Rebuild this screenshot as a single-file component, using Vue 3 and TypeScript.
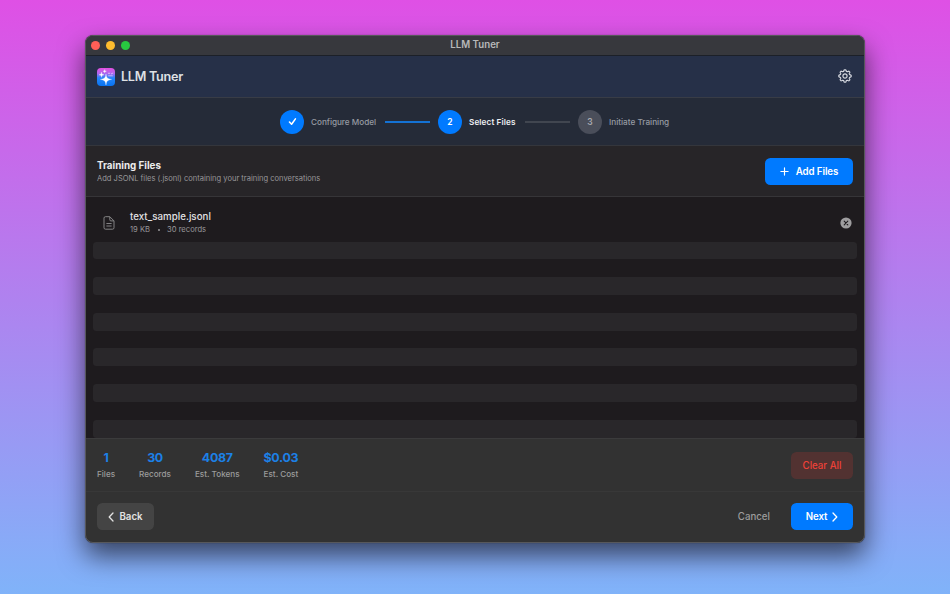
<script setup lang="ts">
interface Stat {
  value: string
  label: string
}

const stats: Stat[] = [
  { value: '1', label: 'Files' },
  { value: '30', label: 'Records' },
  { value: '4087', label: 'Est. Tokens' },
  { value: '$0.03', label: 'Est. Cost' },
]

const stripes = 6

// Outline of an eight-toothed gear with rounded teeth, centred on the origin.
function gearOutline(inner: number, outer: number): string {
  const mid = (inner + outer) / 2
  const amp = (outer - inner) / 2
  const points: string[] = []
  for (let i = 0; i < 160; i++) {
    const a = (i / 160) * Math.PI * 2
    const wave = Math.tanh(2 * Math.cos(8 * a)) / Math.tanh(2)
    const r = mid + amp * wave
    points.push(`${(r * Math.sin(a)).toFixed(2)} ${(-r * Math.cos(a)).toFixed(2)}`)
  }
  return `M${points.join('L')}Z`
}

const gear = gearOutline(4.8, 6.2)
</script>

<template>
  <main class="desktop">
    <section class="window">
      <div class="titlebar">
        <div class="lights">
          <i class="light red"></i>
          <i class="light yellow"></i>
          <i class="light green"></i>
        </div>
        <span class="window-title">LLM Tuner</span>
      </div>

      <header class="header">
        <svg class="logo" viewBox="0 0 18 18">
          <defs>
            <linearGradient id="logo-fill" x1="0" y1="0" x2="0" y2="1">
              <stop offset="0" stop-color="#e34fe0" />
              <stop offset="0.3" stop-color="#b067ee" />
              <stop offset="0.55" stop-color="#2586fb" />
              <stop offset="1" stop-color="#0873f2" />
            </linearGradient>
          </defs>
          <rect width="18" height="18" rx="4" fill="url(#logo-fill)" />
          <path d="M9 6C9.6 10.2 10.4 10.7 14.6 11.4C10.4 12.1 9.6 12.7 9 17C8.4 12.7 7.6 12.1 3.4 11.4C7.6 10.7 8.4 10.2 9 6Z" fill="#fff" stroke="#fff" stroke-width=".3" />
          <path d="M4.5 4.3C4.8 6.2 5 6.4 6.9 6.8C5 7.2 4.8 7.4 4.5 9.3C4.2 7.4 4 7.2 2.1 6.8C4 6.4 4.2 6.2 4.5 4.3Z" fill="#fff" stroke="#fff" stroke-width=".4" />
          <path d="M7.7 1.5C7.9 2.8 8.1 3 9.4 3.2C8.1 3.4 7.9 3.6 7.7 4.9C7.5 3.6 7.3 3.4 6 3.2C7.3 3 7.5 2.8 7.7 1.5Z" fill="#fff" stroke="#fff" stroke-width=".3" />
          <path d="M11 5.3h2M14 6l2-1M11.2 7.8h4.6" fill="none" stroke="#f6dcff" stroke-width=".8" opacity=".8" />
        </svg>
        <h1 class="app-name">LLM Tuner</h1>
        <svg class="gear" viewBox="-7 -7 14 14">
          <path :d="gear" />
          <circle r="2.1" />
        </svg>
      </header>

      <nav class="steps">
        <span class="badge done">
          <svg class="check" viewBox="0 0 12 12"><path d="M2.7 6.5L5 9L9.2 3.1" /></svg>
        </span>
        <span class="step-label first">Configure Model</span>
        <span class="connector filled"></span>
        <span class="badge current">2</span>
        <span class="step-label selected">Select Files</span>
        <span class="connector"></span>
        <span class="badge">3</span>
        <span class="step-label last">Initiate Training</span>
      </nav>

      <div class="toolbar">
        <div>
          <h2 class="section-title">Training Files</h2>
          <p class="section-note">Add JSONL files (.jsonl) containing your training conversations</p>
        </div>
        <button class="button primary add">
          <svg class="plus" viewBox="0 0 10 10"><path d="M5 1v8M1 5h8" /></svg>
          <span>Add Files</span>
        </button>
      </div>

      <div class="list">
        <div class="file">
          <svg class="doc" viewBox="0 0 12 14">
            <path d="M2.4 .7H6.8L11 4.9V11.7Q11 13.2 9.5 13.2H2.5Q1 13.2 1 11.7V2.1Q1 .7 2.4 .7Z" />
            <path d="M6.8 .9V3.8Q6.8 4.9 7.9 4.9H10.8M3.4 7.5H8.6M3.4 10H8.6" />
          </svg>
          <div class="file-info">
            <div class="file-name">text_sample.jsonl</div>
            <div class="file-meta"><span>19 KB</span><i class="dot"></i><span>30 records</span></div>
          </div>
          <svg class="remove" viewBox="0 0 12 12">
            <circle cx="6" cy="6" r="5.6" />
            <path d="M4.2 4.2L7.8 7.8M7.8 4.2L4.2 7.8" />
          </svg>
        </div>
        <div class="stripes">
          <div v-for="n in stripes" :key="n" class="stripe"></div>
        </div>
      </div>

      <div class="summary">
        <div v-for="stat in stats" :key="stat.label" class="stat">
          <strong class="stat-value">{{ stat.value }}</strong>
          <span class="stat-label">{{ stat.label }}</span>
        </div>
        <button class="button danger">Clear All</button>
      </div>

      <footer class="footer">
        <button class="button back">
          <svg class="chevron" viewBox="0 0 6 10"><path d="M5 1L1.2 5L5 9" /></svg>
          <span>Back</span>
        </button>
        <button class="button cancel">Cancel</button>
        <button class="button primary next">
          <span>Next</span>
          <svg class="chevron" viewBox="0 0 6 10"><path d="M1 1L4.8 5L1 9" /></svg>
        </button>
      </footer>
    </section>
  </main>
</template>

<style>
body {
  margin: 0;
  overflow: hidden;
}
</style>

<style scoped>
* {
  box-sizing: border-box;
}

.desktop {
  width: 950px;
  height: 594px;
  padding: 35px 0 0 85px;
  overflow: hidden;
  background: linear-gradient(#df50e5, #80b3f9);
  font-family: Inter, "Liberation Sans", sans-serif;
  white-space: nowrap;
}

.window {
  display: grid;
  grid-template-rows: 20px 42px 48px 51px 241px 54px 1fr;
  width: 780px;
  height: 508px;
  border: 1px solid #57585c;
  border-radius: 8px;
  overflow: hidden;
  background: #323232;
  box-shadow: 0 0 1px rgba(0, 0, 0, 0.6), 0 13px 27px rgba(0, 0, 0, 0.6);
}

.titlebar {
  display: grid;
  grid-template-columns: 1fr auto 1fr;
  align-items: center;
  background: #37383d;
  border-bottom: 1px solid #1c2028;
}

.lights {
  display: flex;
  gap: 6px;
  padding-left: 5px;
}

.light {
  width: 9px;
  height: 9px;
  border-radius: 50%;
}

.red { background: #ff5f57; }
.yellow { background: #febc2e; }
.green { background: #28c840; }

.window-title {
  padding-bottom: 2px;
  color: #b7b8ba;
  font-size: 9.7px;
  font-weight: 600;
  line-height: 17px;
}

.header {
  display: flex;
  align-items: center;
  padding: 0 12px 0 11px;
  background: #263048;
  border-bottom: 1px solid #383c46;
}

.logo {
  width: 18px;
  height: 18px;
}

.app-name {
  margin: 0 0 0 6px;
  color: #dfe1e5;
  font-size: 12.6px;
  font-weight: 600;
  letter-spacing: -0.26px;
}

.gear {
  width: 14px;
  height: 14px;
  margin: 0 0 1px auto;
  fill: none;
  stroke: #d4d7de;
  stroke-width: 1.2;
}

.steps {
  display: flex;
  align-items: center;
  padding-left: 194px;
  background: #252b38;
  border-bottom: 1px solid #34363c;
}

.badge {
  display: flex;
  align-items: center;
  justify-content: center;
  width: 24px;
  height: 24px;
  border-radius: 50%;
  background: #4a4e5a;
  color: #a9abb1;
  font-size: 8.5px;
  font-weight: 600;
}

.badge.done,
.badge.current {
  background: #007aff;
  color: #fff;
}

.check {
  width: 11px;
  height: 11px;
  fill: none;
  stroke: #fff;
  stroke-width: 1.7;
  stroke-linecap: round;
  stroke-linejoin: round;
}

.step-label {
  margin-left: 7px;
  color: #969aa2;
  font-size: 8.2px;
  font-weight: 500;
}

.step-label.first {
  width: 74px;
  letter-spacing: -0.03px;
}

.step-label.selected {
  width: 56px;
  color: #eceef1;
  font-weight: 600;
  letter-spacing: 0.1px;
}

.connector {
  width: 45px;
  height: 2px;
  margin-right: 8px;
  background: #414650;
}

.connector.filled { background: #1472d4; }

.toolbar {
  display: flex;
  align-items: center;
  justify-content: space-between;
  padding: 0 11px;
  background: #272528;
  border-bottom: 1px solid #363538;
}

.section-title {
  margin: 1px 0 2px;
  color: #ececed;
  font-size: 9.8px;
  font-weight: 700;
  line-height: 12px;
}

.section-note {
  margin: 0;
  color: #98979a;
  font-size: 7.56px;
  line-height: 10px;
}

.button {
  display: flex;
  align-items: center;
  justify-content: center;
  height: 27px;
  padding: 0;
  border: 0;
  border-radius: 5.5px;
  background: transparent;
  font-family: inherit;
  font-size: 9.7px;
  font-weight: 600;
}

.primary {
  background: #007aff;
  color: #fff;
}

.add {
  gap: 7px;
  width: 88px;
  letter-spacing: -0.08px;
}

.plus {
  width: 9px;
  height: 9px;
  fill: none;
  stroke: #fff;
  stroke-width: 1.3;
  stroke-linecap: round;
}

.list {
  padding: 7px 7px 0;
  overflow: hidden;
  background: #1e1b1e;
}

.file {
  display: flex;
  align-items: center;
  height: 37.5px;
  padding: 0 5px 0 10px;
}

.doc {
  width: 12px;
  height: 14px;
  fill: none;
  stroke: #8f8e90;
  stroke-width: 0.9;
}

.file-info {
  margin-left: 15px;
  padding-top: 1px;
}

.file-name {
  color: #e3e2e4;
  font-size: 9.7px;
  font-weight: 500;
  letter-spacing: 0.04px;
  line-height: 13px;
}

.file-meta {
  display: flex;
  align-items: center;
  color: #98979a;
  font-size: 7.6px;
  line-height: 13px;
}

.dot {
  width: 2px;
  height: 2px;
  margin: 1px 7.5px 0;
  border-radius: 50%;
  background: #98979a;
}

.remove {
  width: 12px;
  height: 12px;
  margin-left: auto;
  fill: #9e9d9f;
  stroke: #1e1b1e;
  stroke-width: 1.1;
  stroke-linecap: round;
}

.remove circle { stroke: none; }

.stripes {
  display: grid;
  grid-auto-rows: 17.8px;
  gap: 17.85px;
}

.stripe {
  border-radius: 3.5px;
  background: #29272a;
}

.summary {
  display: flex;
  align-items: center;
  padding: 0 11px;
  border-top: 1px solid #3b3b3c;
  border-bottom: 1px solid #383838;
}

.stat {
  display: flex;
  flex-direction: column;
  align-items: center;
  margin-right: 24px;
}

.stat-value {
  color: #1c80e6;
  font-size: 12.4px;
  font-weight: 700;
  letter-spacing: -0.3px;
  line-height: 16px;
}

.stat-label {
  margin-top: 3px;
  color: #9c9c9c;
  font-size: 8.15px;
  font-weight: 500;
  line-height: 11px;
}

.danger {
  width: 62px;
  margin-left: auto;
  background: #523231;
  color: #ee4138;
  font-weight: 500;
}

.footer {
  display: flex;
  align-items: center;
  padding: 0 11px 1px;
}

.back {
  gap: 5px;
  width: 57px;
  background: #444;
  color: #e2e2e2;
}

.chevron {
  width: 6px;
  height: 10px;
  fill: none;
  stroke: currentColor;
  stroke-width: 1.3;
  stroke-linecap: round;
  stroke-linejoin: round;
}

.cancel {
  margin: 0 21px 0 auto;
  color: #9d9d9d;
  font-weight: 500;
}

.next {
  gap: 5px;
  width: 62px;
  letter-spacing: -0.15px;
}
</style>
